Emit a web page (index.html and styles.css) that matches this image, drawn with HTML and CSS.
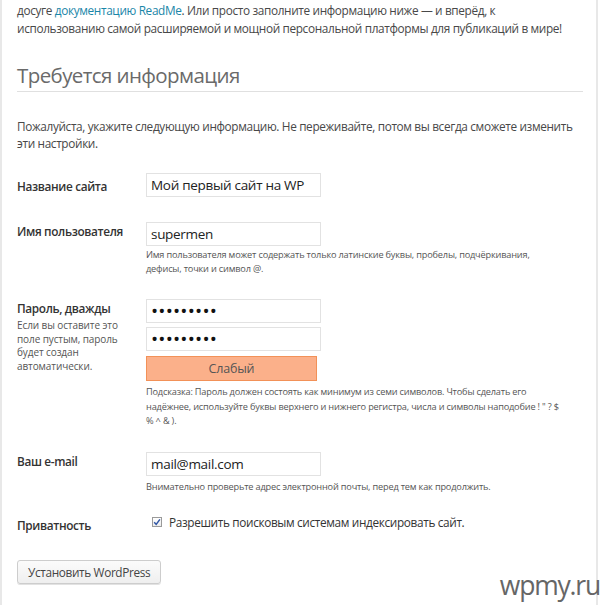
FILE: index.html
```html
<!DOCTYPE html>
<html lang="ru">
<head>
<meta charset="utf-8">
<title>Установка WordPress</title>
<link rel="stylesheet" href="styles.css">
</head>
<body>
<div class="sheet">
  <p class="intro">досуге <a href="#">документацию ReadMe</a>. Или просто заполните информацию ниже — и вперёд, к использованию самой расширяемой и мощной персональной платформы для публикаций в мире!</p>

  <h1 class="section-title">Требуется информация</h1>

  <p class="lead">Пожалуйста, укажите следующую информацию. Не переживайте, потом вы всегда сможете изменить эти настройки.</p>

  <form class="setup">
    <div class="row row-site">
      <label class="label">Название сайта</label>
      <div class="field">
        <input class="text" type="text" value="Мой первый сайт на WP">
      </div>
    </div>

    <div class="row row-user">
      <label class="label">Имя пользователя</label>
      <div class="field">
        <input class="text" type="text" value="supermen">
        <p class="note">Имя пользователя может содержать только латинские буквы, пробелы, подчёркивания, дефисы, точки и символ @.</p>
      </div>
    </div>

    <div class="row row-pass">
      <div class="label">
        Пароль, дважды
        <p class="label-note">Если вы оставите это поле пустым, пароль будет создан автоматически.</p>
      </div>
      <div class="field">
        <input class="text pass" type="password" value="123456789">
        <input class="text pass" type="password" value="123456789">
        <div class="strength">Слабый</div>
        <p class="note hint">Подсказка: Пароль должен состоять как минимум из семи символов. Чтобы сделать его надёжнее, используйте буквы верхнего и нижнего регистра, числа и символы наподобие ! " ? $ % ^ &amp; ).</p>
      </div>
    </div>

    <div class="row row-mail">
      <label class="label">Ваш e-mail</label>
      <div class="field">
        <input class="text" type="text" value="mail@mail.com">
        <p class="note">Внимательно проверьте адрес электронной почты, перед тем как продолжить.</p>
      </div>
    </div>

    <div class="row row-privacy">
      <div class="label">Приватность</div>
      <div class="field">
        <label class="check">
          <span class="box"><svg viewBox="0 0 10 10" width="10" height="10"><path d="M2.2 5.2 L4.2 7.4 L7.9 2.4" fill="none" stroke="#2f55a4" stroke-width="1.5"/></svg></span>
          Разрешить поисковым системам индексировать сайт.
        </label>
      </div>
    </div>

    <button class="submit" type="button">Установить WordPress</button>
  </form>
</div>
<div class="watermark">wpmy.ru</div>
</body>
</html>
```

FILE: styles.css
```css
html, body {
  margin: 0;
  padding: 0;
  background: #fff;
}

body {
  font-family: "Open Sans", "Noto Sans", sans-serif;
  color: #484848;
  font-size: 11.8px;
  letter-spacing: -0.35px;
  width: 600px;
  height: 605px;
  overflow: hidden;
  position: relative;
}

.sheet {
  width: 598px;
  height: 605px;
  box-sizing: border-box;
  border-left: 2px solid #e8e8e8;
  border-right: 2px solid #e8e8e8;
  padding: 1px 15px 0 15px;
}

.intro {
  margin: 0;
  line-height: 18px;
}

.intro a {
  color: #1a86a8;
  text-decoration: none;
}

.section-title {
  margin: 25px 0 0;
  padding-bottom: 3px;
  border-bottom: 1px solid #e0e0e0;
  font-size: 20.5px;
  letter-spacing: -0.6px;
  font-weight: 400;
  color: #6a6a6a;
  line-height: 26px;
  width: 566px;
}

.lead {
  margin: 26px 0 0;
  line-height: 17px;
}

.setup {
  margin-top: 21px;
}

.row {
  display: grid;
  grid-template-columns: 129px 420px;
}

.label {
  font-weight: 600;
  color: #333;
  line-height: 18px;
}

.row-site .label { padding-top: 4px; }
.row-user { margin-top: 25px; }
.row-user .label { padding-top: 0; }
.row-pass { margin-top: 23px; }
.row-mail { margin-top: 23px; }
.row-privacy { margin-top: 19px; }
.row-privacy .label { padding-top: 3px; }

.field {
  display: flex;
  flex-direction: column;
  align-items: flex-start;
}

.text {
  width: 175px;
  height: 24px;
  box-sizing: border-box;
  border: 1px solid #e2e2e2;
  background: #fff;
  padding: 0 4px;
  font-family: "Open Sans", "Noto Sans", sans-serif;
  font-size: 13.5px;
  letter-spacing: -0.3px;
  color: #222;
  margin: 0;
  outline: none;
}

.pass {
  font-size: 19px;
  letter-spacing: 0.2px;
  color: #111;
}

.pass + .pass {
  margin-top: 4px;
}

.note {
  width: 420px;
  margin: 2px 0 0;
  font-size: 9.2px;
  letter-spacing: -0.18px;
  line-height: 14px;
  color: #555;
}

.hint {
  margin-top: 4px;
  line-height: 14.5px;
}

.row-mail .note {
  margin-top: 4px;
}

.label-note {
  margin: 2px 0 0;
  font-weight: 400;
  font-size: 10px;
  letter-spacing: -0.1px;
  line-height: 13.5px;
  color: #555;
  width: 112px;
}

.strength {
  width: 171px;
  height: 25px;
  box-sizing: border-box;
  margin-top: 5px;
  background: #fbb08a;
  border: 1px solid #f29158;
  text-align: center;
  line-height: 23px;
  font-size: 12.5px;
  letter-spacing: -0.2px;
  color: #555;
}

.check {
  display: flex;
  align-items: center;
  gap: 7px;
  white-space: nowrap;
  line-height: 18px;
  color: #333;
  margin-left: 6px;
}

.box {
  width: 10px;
  height: 10px;
  box-sizing: border-box;
  border: 1px solid #9a9a9a;
  background: linear-gradient(#fff, #ececec);
  display: flex;
  align-items: center;
  justify-content: center;
}

.box svg {
  display: block;
  flex: none;
}

.submit {
  display: block;
  margin-top: 26px;
  height: 24px;
  padding: 0 10px;
  font-family: "Open Sans", "Noto Sans", sans-serif;
  font-size: 11.8px;
  letter-spacing: -0.35px;
  color: #444;
  background: linear-gradient(#fbfbfb, #efefef);
  border: 1px solid #cdcdcd;
  border-radius: 3px;
  box-shadow: 0 1px 0 #e2e2e2;
}

.watermark {
  position: absolute;
  right: 0;
  bottom: 6px;
  font-family: "Open Sans", "Noto Sans", sans-serif;
  font-size: 26.5px;
  line-height: 27px;
  color: #666;
  letter-spacing: -1.2px;
}
```
